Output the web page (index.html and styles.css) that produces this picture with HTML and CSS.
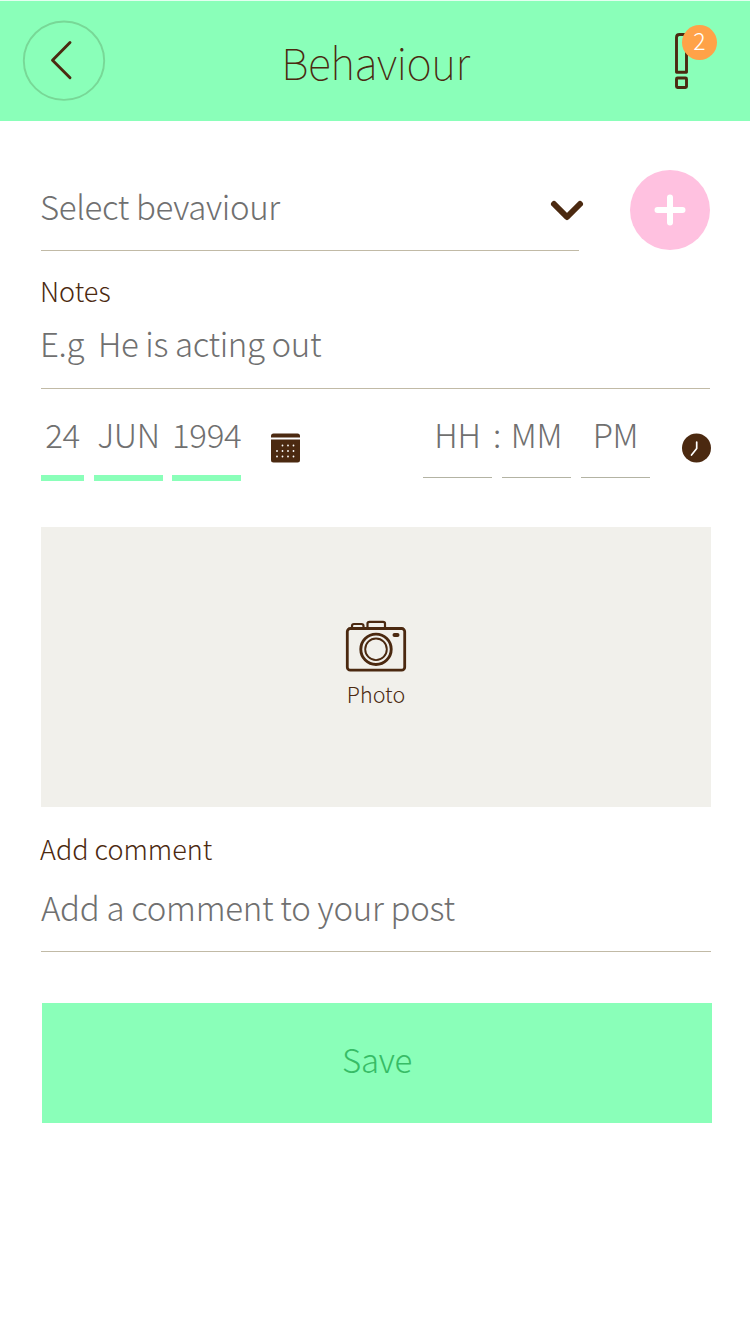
FILE: index.html
```html
<!DOCTYPE html>
<html lang="en">
<head>
<meta charset="utf-8">
<title>Behaviour</title>
<link rel="stylesheet" href="styles.css">
</head>
<body>
<header class="topbar">
  <button class="back" aria-label="Back">
    <svg width="82" height="80" viewBox="0 0 82 80"><ellipse cx="41" cy="39.700" rx="40.200" ry="39.200" fill="none" stroke="#78d897" stroke-width="1.900"/><path d="M47 21.500 29.500 39.300 47 56.700" fill="none" stroke="#4b2910" stroke-width="2.900" stroke-linecap="round" stroke-linejoin="round"/></svg>
  </button>
  <h1 class="title">Behaviour</h1>
  <div class="alerts">
    <svg width="13" height="57" viewBox="0 0 13 57" fill="none" stroke="#4b2910" stroke-width="2.900"><path d="M1.500 40.300V5.500Q1.500 2.500 4.500 2.500H8.500Q11.500 2.500 11.500 5.500V40.300Z" stroke-linejoin="round"/><rect x="1.500" y="46" width="10" height="9.500" rx="1"/></svg>
    <span class="badge">2</span>
  </div>
</header>
<main class="form">
  <div class="select-row">
    <div class="select"><span class="value t-select">Select bevaviour</span>
      <svg class="chevron" width="34" height="22" viewBox="0 0 34 22"><path d="M4 4 17 17 30 4" fill="none" stroke="#4b2910" stroke-width="6" stroke-linecap="round" stroke-linejoin="round"/></svg>
    </div>
    <button class="add" aria-label="Add behaviour"><svg width="32" height="32" viewBox="0 0 32 32"><path d="M16 3.500V28.500M3.500 16H28.500" stroke="#fff" stroke-width="6" stroke-linecap="round"/></svg></button>
  </div>
  <div class="label notes-label">Notes</div>
  <div class="field notes"><span class="value t-notes">E.g&nbsp; He is acting out</span></div>
  <div class="when">
    <div class="part day"><span class="value">24</span></div>
    <div class="part month"><span class="value">JUN</span></div>
    <div class="part year"><span class="value">1994</span></div>
    <svg class="calendar" width="29" height="30" viewBox="0 0 29 30"><path d="M0 4.500V3Q0 .5 2.500.5H26.500Q29 .5 29 3V4.500ZM0 6.500H29V27Q29 29.500 26.500 29.500H2.500Q0 29.500 0 27Z" fill="#4b2910"/><path d="M11.500 12.500h11.300M6 18h16.800M6 23.500h16.800" stroke="#fff" stroke-width="1.800" stroke-linecap="round" stroke-dasharray="0 5.500"/></svg>
    <div class="part time hour"><span class="value">HH</span></div>
    <span class="value colon">:</span>
    <div class="part time minute"><span class="value">MM</span></div>
    <div class="part time period"><span class="value">PM</span></div>
    <svg class="clock" width="29" height="30" viewBox="0 0 29 30"><circle cx="14.500" cy="15" r="14.500" fill="#4b2910"/><path d="M14.700 9V15.500L9.500 22" fill="none" stroke="#fff" stroke-width="1.700" stroke-linecap="round" stroke-linejoin="round"/></svg>
  </div>
  <div class="photo">
    <svg width="60" height="52" viewBox="0 0 60 52" fill="none" stroke="#4b2910"><rect x="1.300" y="8.500" width="57.400" height="41.700" rx="3" stroke-width="2.800"/><path d="M6 8V6Q6 4 8 4H15.500Q17.500 4 17.500 6V8M21.500 8V3.500Q21.500 1.800 23.500 1.800H37Q39 1.800 39 3.500V8" stroke-width="2.200"/><circle cx="30" cy="29.300" r="15.200" stroke-width="2.900"/><circle cx="30" cy="29.300" r="10.800" stroke-width="1.900"/><rect x="46.500" y="13" width="7" height="4" rx="2" fill="#4b2910" stroke="none"/></svg>
    <span class="photo-text">Photo</span>
  </div>
  <div class="label comment-label">Add comment</div>
  <div class="field comment"><span class="value t-comment">Add a comment to your post</span></div>
  <button class="save"><span>Save</span></button>
</main>
</body>
</html>
```
FILE: styles.css
```css
* { box-sizing: border-box; }
body { margin: 0; width: 750px; height: 1335px; background: #fff; font-family: "Noto Sans CJK SC", "Noto Sans", sans-serif; font-weight: 300; color: #4b2910; }
button { border: 0; padding: 0; background: none; font: inherit; color: inherit; }
svg { display: block; flex: none; overflow: visible; }
.topbar { height: 121px; background: #8affb9; border-top: 1px solid #e4fff0; display: flex; align-items: flex-start; padding: 0 33px 0 23px; }
.back { margin-top: 20px; width: 82px; height: 80px; }
.title { flex: 1; margin: 30px 29px 0 0; font-size: 43px; line-height: 60px; font-weight: 100; white-space: nowrap; letter-spacing: -0.5px; text-align: center; }
.alerts { position: relative; width: 42px; height: 57px; margin-top: 31px; }
.badge { position: absolute; left: 7px; top: -7px; width: 35px; height: 35px; border-radius: 50%; background: #ffa248; color: #fff; font-size: 23px; line-height: 31px; text-align: center; }
.form { padding: 49px 39px 0 41px; }
.select-row { display: flex; justify-content: space-between; height: 81px; }
.select { width: 538px; height: 81px; border-bottom: 1px solid #c1baa6; padding-top: 16px; display: flex; justify-content: space-between; }
.chevron { margin: 14px -5px 0 0; }
.value { font-size: 33px; line-height: 40px; color: #707070; white-space: nowrap; }
.t-select, .t-notes { letter-spacing: -0.35px; margin-left: -1px; }
.t-comment { letter-spacing: -0.28px; }
.add { width: 80px; height: 80px; margin-right: 1px; border-radius: 50%; background: #ffc1e0; display: flex; align-items: center; justify-content: center; }
.label { font-size: 27px; line-height: 40px; margin-left: -1px; white-space: nowrap; }
.notes-label { margin-top: 20px; }
.field { border-bottom: 1px solid #c1baa6; }
.notes { width: 669px; height: 78px; padding-top: 12px; }
.when { display: flex; margin-top: 25px; height: 68px; }
.part { height: 67px; border-bottom: 6px solid #8affb9; text-align: center; }
.part .value { letter-spacing: -0.3px; }
.day { width: 43px; }
.month { width: 69px; margin-left: 10px; }
.year { width: 69px; margin-left: 9px; }
.calendar { margin: 18.5px 0 0 30px; }
.time { height: 64px; width: 69px; border-bottom: 1px solid #b3b3a3; }
.hour { margin-left: 123px; }
.colon { width: 10px; text-align: center; }
.period { margin-left: 10px; }
.clock { margin: 18.5px 0 0 32px; }
.photo { width: 670px; height: 280px; margin-top: 44.500px; background: #f1f0eb; display: flex; flex-direction: column; align-items: center; padding-top: 93.500px; }
.photo-text { font-size: 21.500px; line-height: 30px; margin-top: 7px; }
.comment-label { margin-top: 22.500px; }
.comment { width: 670px; height: 83px; padding-top: 18px; }
.save { display: flex; justify-content: center; width: 670px; height: 120px; margin: 51px 0 0 1px; background: #8affb9; color: #37bc66; font-size: 33px; line-height: 40px; letter-spacing: -0.3px; padding-top: 36px; }
```
